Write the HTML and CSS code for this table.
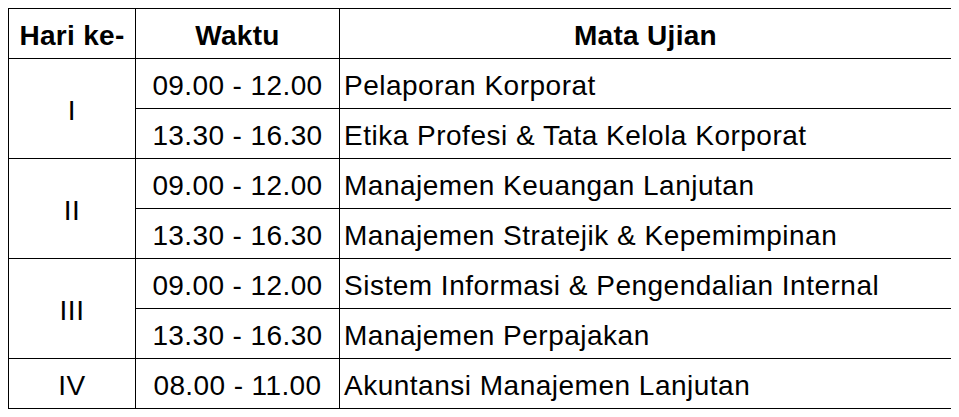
FILE: index.html
```html
<!DOCTYPE html>
<html>
<head>
<meta charset="utf-8">
<link rel="stylesheet" href="styles.css">
</head>
<body>
<table class="jadwal">
  <colgroup>
    <col class="c-hari">
    <col class="c-waktu">
    <col class="c-mata">
  </colgroup>
  <thead>
    <tr>
      <th>Hari ke-</th>
      <th>Waktu</th>
      <th>Mata Ujian</th>
    </tr>
  </thead>
  <tbody>
    <tr>
      <td class="hari" rowspan="2">I</td>
      <td class="waktu">09.00 - 12.00</td>
      <td class="mata">Pelaporan Korporat</td>
    </tr>
    <tr>
      <td class="waktu">13.30 - 16.30</td>
      <td class="mata">Etika Profesi &amp; Tata Kelola Korporat</td>
    </tr>
    <tr>
      <td class="hari" rowspan="2">II</td>
      <td class="waktu">09.00 - 12.00</td>
      <td class="mata">Manajemen Keuangan Lanjutan</td>
    </tr>
    <tr>
      <td class="waktu">13.30 - 16.30</td>
      <td class="mata">Manajemen Stratejik &amp; Kepemimpinan</td>
    </tr>
    <tr>
      <td class="hari" rowspan="2">III</td>
      <td class="waktu">09.00 - 12.00</td>
      <td class="mata">Sistem Informasi &amp; Pengendalian Internal</td>
    </tr>
    <tr>
      <td class="waktu">13.30 - 16.30</td>
      <td class="mata">Manajemen Perpajakan</td>
    </tr>
    <tr>
      <td class="hari">IV</td>
      <td class="waktu">08.00 - 11.00</td>
      <td class="mata">Akuntansi Manajemen Lanjutan</td>
    </tr>
  </tbody>
</table>
</body>
</html>
```

FILE: styles.css
```css
html, body {
  background: #fff;
}
body {
  margin: 8px;
  font-family: "Liberation Sans", Arial, sans-serif;
  color: #000;
}
.jadwal {
  border-collapse: collapse;
  table-layout: fixed;
  width: 943px;
  font-size: 28px;
  letter-spacing: 0.5px;
}
.c-hari { width: 127px; }
.c-waktu { width: 204px; }
.c-mata { width: 612px; }
.jadwal th,
.jadwal td {
  border: 1px solid #000;
  height: 45px;
  padding: 4px 0 0 0;
  vertical-align: middle;
  white-space: nowrap;
}
.jadwal th {
  font-weight: bold;
  text-align: center;
  letter-spacing: 0.3px;
}
.hari,
.waktu {
  text-align: center;
}
.waktu {
  letter-spacing: 0.4px;
}
.mata {
  text-align: left;
  padding-left: 4px !important;
}
```
